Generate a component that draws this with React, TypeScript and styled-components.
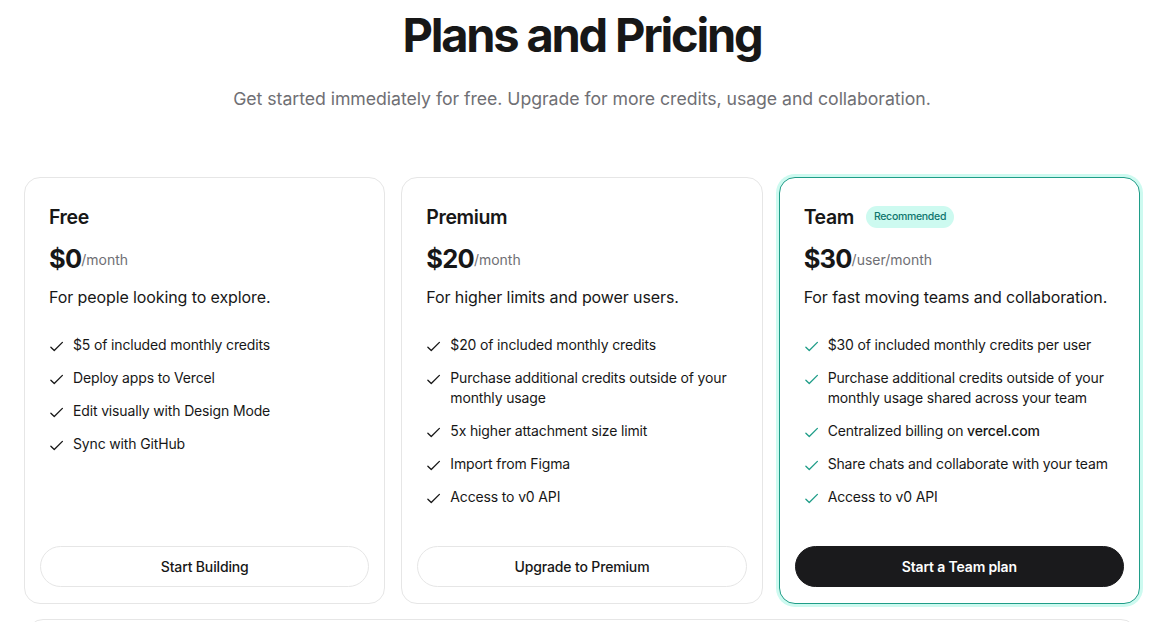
import React from "react";
import styled, { createGlobalStyle, css } from "styled-components";

const colors = {
    ink: "#171717",
    muted: "#6f6f74",
    line: "#e6e6e6",
    teal: "#1f9d88",
    mint: "#cdfaf0",
    badgeText: "#0f766e",
    dark: "#1a1a1c",
};

const GlobalStyle = createGlobalStyle`
    html, body {
        margin: 0;
        padding: 0;
        background: #ffffff;
        overflow: hidden;
    }
    body {
        font-family: Inter, "Noto Sans", "Liberation Sans", sans-serif;
        color: ${colors.ink};
        -webkit-font-smoothing: antialiased;
    }
`;

const Page = styled.div`
    width: 1164px;
    box-sizing: border-box;
    padding: 6px 24px 0;
    display: flex;
    flex-direction: column;
    align-items: center;
`;

const Title = styled.h1`
    margin: 0;
    font-size: 47px;
    line-height: 58px;
    font-weight: 700;
    letter-spacing: -2.2px;
    color: ${colors.ink};
`;

const Subtitle = styled.p`
    margin: 21px 0 0;
    font-size: 17.7px;
    line-height: 28px;
    color: ${colors.muted};
    letter-spacing: -0.05px;
`;

const Grid = styled.div`
    margin-top: 64px;
    width: 100%;
    display: grid;
    grid-template-columns: repeat(3, 1fr);
    gap: 16px;
`;

const Card = styled.div<{ $highlight?: boolean }>`
    box-sizing: border-box;
    height: 427px;
    border: 1px solid ${colors.line};
    border-radius: 16px;
    background: #fff;
    display: flex;
    flex-direction: column;
    ${({ $highlight }) =>
        $highlight &&
        css`
            border-color: ${colors.teal};
            box-shadow: 0 0 0 3px ${colors.mint};
        `}
`;

const CardBody = styled.div`
    padding: 24px 24px 0;
    flex: 1;
`;

const NameRow = styled.div`
    display: flex;
    align-items: center;
    gap: 12px;
    height: 30px;
`;

const Name = styled.h2`
    margin: 0;
    font-size: 19.5px;
    font-weight: 600;
    letter-spacing: -0.4px;
`;

const Badge = styled.span`
    background: ${colors.mint};
    color: ${colors.badgeText};
    font-size: 10.5px;
    font-weight: 500;
    line-height: 22px;
    padding: 0 8px;
    border-radius: 999px;
    letter-spacing: -0.3px;
`;

const PriceRow = styled.div`
    margin-top: 12px;
    display: flex;
    align-items: flex-end;
    height: 30px;
`;

const Amount = styled.span`
    font-size: 25.5px;
    line-height: 30px;
    font-weight: 700;
    letter-spacing: -0.8px;
`;

const Period = styled.span`
    font-size: 14px;
    line-height: 28px;
    color: ${colors.muted};
`;

const Description = styled.p`
    margin: 11px 0 0;
    font-size: 16px;
    line-height: 24px;
    letter-spacing: -0.1px;
`;

const Features = styled.ul`
    list-style: none;
    margin: 26px 0 0;
    padding: 0;
    display: flex;
    flex-direction: column;
    gap: 13px;
`;

const Feature = styled.li`
    display: flex;
    align-items: flex-start;
    gap: 9px;
    font-size: 14px;
    line-height: 20px;
    letter-spacing: -0.15px;
    strong {
        font-weight: 500;
    }
`;

const Check = styled.svg<{ $color: string }>`
    flex: none;
    width: 15px;
    height: 15px;
    margin-top: 4px;
    color: ${({ $color }) => $color};
`;

const Footer = styled.div`
    padding: 0 15px 16px;
`;

const Button = styled.button<{ $primary?: boolean }>`
    width: 100%;
    height: 41px;
    border-radius: 999px;
    font-family: inherit;
    font-size: 14px;
    font-weight: 500;
    letter-spacing: -0.15px;
    cursor: pointer;
    border: 1px solid ${colors.line};
    background: #fff;
    color: ${colors.ink};
    ${({ $primary }) =>
        $primary &&
        css`
            border-color: ${colors.dark};
            background: ${colors.dark};
            color: #fff;
            font-weight: 600;
        `}
`;

const NextCard = styled.div`
    margin-top: 15px;
    width: calc(100% - 8px);
    height: 80px;
    border: 1px solid ${colors.line};
    border-radius: 16px;
`;

type Plan = {
    name: string;
    amount: string;
    period: string;
    description: string;
    features: React.ReactNode[];
    cta: string;
    highlight?: boolean;
};

const plans: Plan[] = [
    {
        name: "Free",
        amount: "$0",
        period: "/month",
        description: "For people looking to explore.",
        features: [
            "$5 of included monthly credits",
            "Deploy apps to Vercel",
            "Edit visually with Design Mode",
            "Sync with GitHub",
        ],
        cta: "Start Building",
    },
    {
        name: "Premium",
        amount: "$20",
        period: "/month",
        description: "For higher limits and power users.",
        features: [
            "$20 of included monthly credits",
            "Purchase additional credits outside of your monthly usage",
            "5x higher attachment size limit",
            "Import from Figma",
            "Access to v0 API",
        ],
        cta: "Upgrade to Premium",
    },
    {
        name: "Team",
        amount: "$30",
        period: "/user/month",
        description: "For fast moving teams and collaboration.",
        features: [
            "$30 of included monthly credits per user",
            "Purchase additional credits outside of your monthly usage shared across your team",
            <>
                Centralized billing on <strong>vercel.com</strong>
            </>,
            "Share chats and collaborate with your team",
            "Access to v0 API",
        ],
        cta: "Start a Team plan",
        highlight: true,
    },
];

const CheckIcon = ({ color }: { color: string }) => (
    <Check $color={color} viewBox="0 0 16 16" fill="none">
        <path
            d="M2 8.8 L5.6 12.3 L14.3 3.6"
            stroke="currentColor"
            strokeWidth="1.4"
            strokeLinecap="round"
            strokeLinejoin="round"
        />
    </Check>
);

const PlanCard = ({ plan }: { plan: Plan }) => (
    <Card $highlight={plan.highlight}>
        <CardBody>
            <NameRow>
                <Name>{plan.name}</Name>
                {plan.highlight && <Badge>Recommended</Badge>}
            </NameRow>
            <PriceRow>
                <Amount>{plan.amount}</Amount>
                <Period>{plan.period}</Period>
            </PriceRow>
            <Description>{plan.description}</Description>
            <Features>
                {plan.features.map((feature, i) => (
                    <Feature key={i}>
                        <CheckIcon color={plan.highlight ? colors.teal : colors.ink} />
                        <span>{feature}</span>
                    </Feature>
                ))}
            </Features>
        </CardBody>
        <Footer>
            <Button $primary={plan.highlight}>{plan.cta}</Button>
        </Footer>
    </Card>
);

const App = () => (
    <>
        <GlobalStyle />
        <Page>
            <Title>Plans and Pricing</Title>
            <Subtitle>
                Get started immediately for free. Upgrade for more credits, usage and
                collaboration.
            </Subtitle>
            <Grid>
                {plans.map((plan) => (
                    <PlanCard key={plan.name} plan={plan} />
                ))}
            </Grid>
            <NextCard />
        </Page>
    </>
);

export default App;
